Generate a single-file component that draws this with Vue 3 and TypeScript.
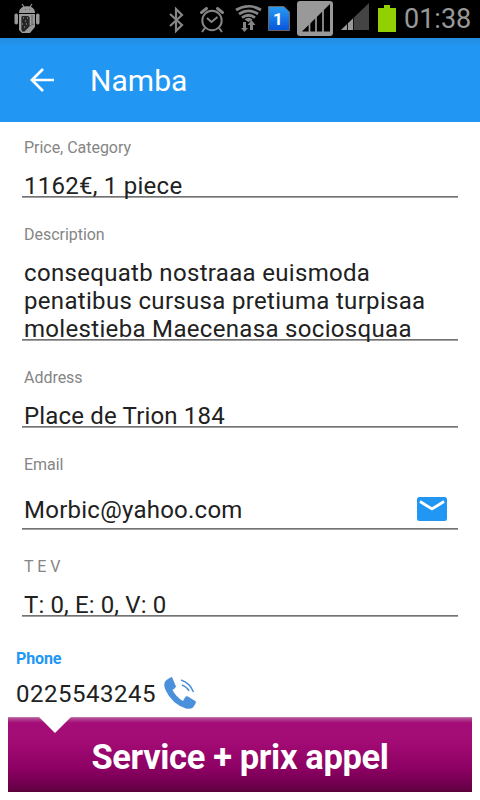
<script setup lang="ts">
interface Field {
  label: string
  lines: string[]
  kind: string
  mail?: boolean
}

const fields: Field[] = [
  { label: 'Price, Category', lines: ['1162€, 1 piece'], kind: 'price' },
  {
    label: 'Description',
    lines: ['consequatb nostraaa euismoda', 'penatibus cursusa pretiuma turpisaa', 'molestieba Maecenasa sociosquaa'],
    kind: 'description',
  },
  { label: 'Address', lines: ['Place de Trion 184'], kind: 'address' },
  { label: 'Email', lines: ['Morbic@yahoo.com'], kind: 'email', mail: true },
  { label: 'T E V', lines: ['T: 0, E: 0, V: 0'], kind: 'tev' },
]
</script>

<template>
  <div class="screen">
    <header class="status">
      <svg class="robot" width="27" height="32" viewBox="14 3 27 32">
        <path d="M19 13C19 8 23 6.300 27 6.300S35 8 35 13Z" fill="#999" />
        <path d="m22 4 2 3m8-3-2 3" stroke="#999" stroke-width="1.200" />
        <rect x="14.500" y="13.500" width="3.500" height="11" rx="1.700" fill="#999" />
        <rect x="36" y="13.500" width="3.500" height="11" rx="1.700" fill="#999" />
        <path d="M19 14H35V27L30 33H22L19 30Z" fill="#999" />
        <path d="M21 17 22 15.500H28L30 17V26L24 32H22L21 30Z" fill="#252525" stroke="#bbb" stroke-width=".6" />
        <path d="M23 18h1m3 0h1m-3 3h1m-4 3h1m3 0h1m-3 3h1" stroke="#aaa" stroke-width="1" />
        <path d="m24 32 7-7 3-1M32 15v9M25 9.500h1m3 0h1" stroke="#555" stroke-width=".8" fill="none" />
      </svg>
      <svg class="bluetooth" width="15" height="26" viewBox="169 7 15 26">
        <path d="m170 14 12 11-6 6V9l6 6-12 11" fill="none" stroke="#858585" stroke-width="2.200" />
      </svg>
      <svg class="alarm" width="26" height="27" viewBox="199 6 26 27">
        <circle cx="212" cy="20.500" r="9.700" fill="none" stroke="#858585" stroke-width="2" />
        <path d="m207 18 4.500 4 6-5M205 28l-3 4m17-4 3 4" fill="none" stroke="#858585" stroke-width="2" />
        <path d="m201.500 12.500 5-4m11 0 5 4" fill="none" stroke="#858585" stroke-width="3" stroke-linecap="round" />
      </svg>
      <svg class="wifi" width="27" height="29" viewBox="235 4 27 29">
        <g fill="none" stroke="#858585" stroke-width="2.700">
          <path d="M236 10Q248.500 2.500 261 10M239 14Q248.500 7.700 258 14M242 17.700Q248.500 12.800 255 17.700" />
        </g>
        <path d="M244.500 19.500Q248.500 16 252.500 19.500L248.500 22ZM243 22v6h-2l3.500 4 3.500-4h-2v-6ZM250 30v-5h-2.500l4-5 4 5H253v5Z" fill="#858585" />
      </svg>
      <svg class="sim" width="22" height="26" viewBox="268 6 22 26">
        <defs><linearGradient id="sim" x2="0" y2="1"><stop stop-color="#299bf4" /><stop offset="1" stop-color="#0655dc" /></linearGradient></defs>
        <path d="M268.500 6.500H284L289.500 12V30.500H268.500Z" fill="url(#sim)" stroke="#6b665f" />
        <text x="273" y="25" class="sim-number">1</text>
      </svg>
      <svg class="signal-box" width="37" height="36" viewBox="297 1 37 36">
        <rect x="297" y="1" width="36" height="35" rx="3" fill="#999" />
        <path d="M302 31.500 330 4V31.500Z" fill="#000" />
        <path d="M309.500 23v9m6.500-15v15m7-22v22" stroke="#999" stroke-width="1.700" />
      </svg>
      <svg class="signal" width="29" height="28" viewBox="341 3 29 28">
        <path d="M341 30 369 3V30Z" fill="#444" />
        <path d="M341 30 354 17.500V30Z" fill="#999" />
        <path d="M347.500 23v7m6-13v13" stroke="#111" stroke-width="1" />
      </svg>
      <svg class="battery" width="18" height="27" viewBox="378 5 18 27">
        <path d="M384 5H390V8H396V32H378V8H384Z" fill="#93d003" />
      </svg>
      <time class="clock">01:38</time>
    </header>

    <nav class="bar">
      <svg class="back" width="26" height="26" viewBox="29 67 26 26">
        <path d="M43 69 32 80 43 91M32 80H54" fill="none" stroke="#fff" stroke-width="2.700" />
      </svg>
      <h1>Namba</h1>
    </nav>

    <main>
      <section v-for="field in fields" :key="field.label" class="field" :class="field.kind">
        <label>{{ field.label }}</label>
        <div class="value">
          <div class="lines">
            <div v-for="line in field.lines" :key="line">{{ line }}</div>
          </div>
          <svg v-if="field.mail" class="envelope" width="30" height="24" viewBox="0 0 30 24">
            <rect width="30" height="24" rx="2.500" fill="#2196f3" />
            <path d="m3 4.500 12 7.500 12-7.500" fill="none" stroke="#fff" stroke-width="2.700" />
          </svg>
        </div>
      </section>

      <section class="phone">
        <label>Phone</label>
        <div class="phone-row">
          <span>0225543245</span>
          <svg width="33" height="33" viewBox="0 0 33 33">
            <path d="M5.500 1 8 0 12 9.500Q11.500 11 8.500 13Q12 20 19 24L21 20.500Q22 18.500 24 19.500L32 24.500Q32 27 29 30.500Q26.500 32.500 22 31.500Q8 27 1.500 13Q-1.500 6 2.500 3Z" fill="#4a90db" />
            <path d="M17 3Q26 6 29.500 15M18 8Q23 10 25 14" fill="none" stroke="#4a90db" stroke-width="1.500" />
          </svg>
        </div>
      </section>
    </main>

    <footer class="banner"><span>Service + prix appel</span></footer>
  </div>
</template>

<style>
body { margin: 0; background: #fff; }
</style>

<style scoped>
.screen { width: 480px; height: 800px; overflow: hidden; background: #fff; font-family: Roboto, sans-serif; color: #212121; }
svg { display: block; flex: none; }
.status { height: 38px; box-sizing: border-box; display: flex; align-items: flex-start; background: #000; }
.robot { margin: 3px 0 0 14px; }
.bluetooth { margin: 7px 0 0 128px; }
.alarm { margin: 6px 0 0 15px; }
.wifi { margin: 4px 0 0 10px; }
.sim { margin: 6px 0 0 6px; }
.sim-number { font: bold 17px Roboto, sans-serif; fill: #fff; }
.signal-box { margin: 1px 0 0 7px; }
.signal { margin: 3px 0 0 7px; }
.battery { margin: 5px 0 0 8px; }
.clock { margin: 3px 0 0 8px; font-size: 27px; line-height: 32px; font-weight: 400; color: #999; white-space: nowrap; }
.bar { height: 84px; display: flex; align-items: center; background: linear-gradient(#248ce0, #2196f3 8px); color: #fff; }
.back { margin-left: 29px; }
h1 { margin: 1px 0 0 35px; font-size: 30px; line-height: 36px; font-weight: 400; letter-spacing: .05px; }
.field { margin: 0 22px 1px; padding: 26px 2px 0; border-bottom: 1px solid #737373; box-shadow: 0 1px #a0a0a0; }
.field:first-child { padding-top: 15px; }
label { display: block; height: 19px; padding-top: 1px; font-size: 16px; line-height: 20px; letter-spacing: -.03px; color: #858585; }
.value { margin-top: 15px; height: 24px; display: flex; justify-content: space-between; }
.lines { font-size: 24px; line-height: 28px; white-space: nowrap; }
.price .lines { letter-spacing: .25px; }
.description .lines { letter-spacing: .32px; }
.address .lines { letter-spacing: .17px; }
.email .lines { letter-spacing: .25px; }
.tev .lines { letter-spacing: .12px; }
.description .value { height: 80px; }
.email .value { margin-top: 22px; height: 32px; }
.envelope { margin: 1px 9px 0 0; }
.phone { height: 100px; box-sizing: border-box; padding: 31px 16px 0; }
.phone label { font-weight: 700; letter-spacing: -.1px; color: #2196f3; }
.phone-row { display: flex; align-items: flex-start; gap: 8px; margin-top: 9px; }
.phone-row span { padding-top: 3px; font-size: 24px; line-height: 28px; letter-spacing: .5px; }
.banner { position: relative; box-sizing: border-box; margin: 0 8px; padding-top: 4px; height: 75px; display: flex; justify-content: center; align-items: center; color: #fff; font-size: 34.500px; font-weight: 700; letter-spacing: -.36px; white-space: nowrap; background: linear-gradient(#c47db0 0, #ae3f8c 2px, #a40c78 6px, #a40c75 23px, #8c0063 52px, #670047 72px, #560038 75px); }
.banner::before { content: ""; position: absolute; top: 0; left: 31px; width: 32px; height: 16px; background: #fff; clip-path: polygon(0 0, 100% 0, 50% 100%); }
</style>
